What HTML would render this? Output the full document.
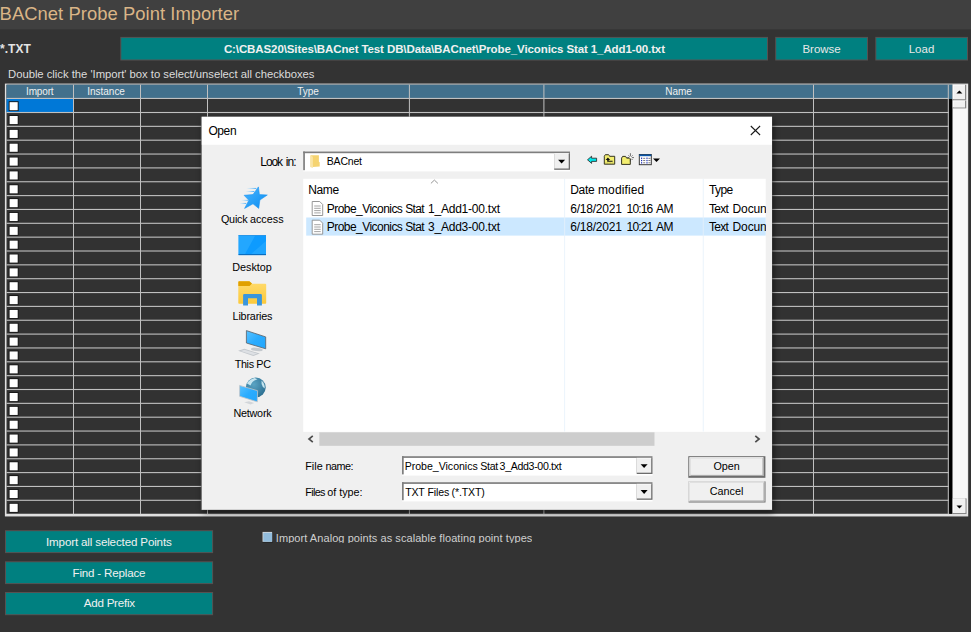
<!DOCTYPE html>
<html><head><meta charset="utf-8"><title>BACnet Probe Point Importer</title>
<style>
html,body{margin:0;padding:0;background:#333333;overflow:hidden;}
#app{position:relative;width:971px;height:632px;background:#333333;overflow:hidden;font-family:"Liberation Sans",Arial,sans-serif;}
#app svg{position:absolute;left:0;top:0;}
.t{position:absolute;white-space:nowrap;display:block;}
</style></head><body>
<div id="app">
<svg width="971" height="632" viewBox="0 0 971 632">
<rect x="0" y="0" width="971.00" height="29.40" fill="#404040" />
<rect x="120.3" y="36.9" width="647.70" height="23.60" fill="#565252" />
<rect x="121.3" y="37.9" width="645.70" height="21.60" fill="#008080" />
<rect x="775.2" y="36.9" width="92.80" height="23.60" fill="#565252" />
<rect x="776.2" y="37.9" width="90.80" height="21.60" fill="#008080" />
<rect x="875.3" y="36.9" width="92.70" height="23.60" fill="#565252" />
<rect x="876.3" y="37.9" width="90.70" height="21.60" fill="#008080" />
<rect x="5.0" y="530.2" width="208.10" height="22.90" fill="#565252" />
<rect x="6.0" y="531.2" width="206.10" height="20.90" fill="#008080" />
<rect x="5.0" y="561.3" width="208.10" height="22.80" fill="#565252" />
<rect x="6.0" y="562.3" width="206.10" height="20.80" fill="#008080" />
<rect x="5.0" y="592" width="208.10" height="23.20" fill="#565252" />
<rect x="6.0" y="593" width="206.10" height="21.20" fill="#008080" />
<rect x="262.5" y="531.9" width="10.50" height="10.60" fill="#1c1c1c" />
<rect x="262.5" y="531.9" width="9.70" height="9.90" fill="#dcdcdc" />
<rect x="263.3" y="532.7" width="8.80" height="9.00" fill="#92bcdc" />
<rect x="4.9" y="83.6" width="963.30" height="432.85" fill="#e0e0e0" />
<rect x="6.5" y="84.69999999999999" width="946.10" height="429.05" fill="#323232" />
<rect x="6.5" y="84.69999999999999" width="946.10" height="14.30" fill="#42708c" />
<rect x="6.5" y="98.45" width="67.00" height="14.05" fill="#0078d7" />
<rect x="949.1" y="99" width="3.50" height="414.75" fill="#000" />
<rect x="6.5" y="97.9" width="942.30" height="1.10" fill="#c0c0c0" />
<rect x="6.5" y="111.95" width="942.30" height="1.10" fill="#c0c0c0" />
<rect x="6.5" y="125.80000000000001" width="942.30" height="1.10" fill="#c0c0c0" />
<rect x="6.5" y="139.64999999999998" width="942.30" height="1.10" fill="#c0c0c0" />
<rect x="6.5" y="153.5" width="942.30" height="1.10" fill="#c0c0c0" />
<rect x="6.5" y="167.35" width="942.30" height="1.10" fill="#c0c0c0" />
<rect x="6.5" y="181.2" width="942.30" height="1.10" fill="#c0c0c0" />
<rect x="6.5" y="195.05" width="942.30" height="1.10" fill="#c0c0c0" />
<rect x="6.5" y="208.89999999999998" width="942.30" height="1.10" fill="#c0c0c0" />
<rect x="6.5" y="222.75" width="942.30" height="1.10" fill="#c0c0c0" />
<rect x="6.5" y="236.6" width="942.30" height="1.10" fill="#c0c0c0" />
<rect x="6.5" y="250.45" width="942.30" height="1.10" fill="#c0c0c0" />
<rect x="6.5" y="264.3" width="942.30" height="1.10" fill="#c0c0c0" />
<rect x="6.5" y="278.15" width="942.30" height="1.10" fill="#c0c0c0" />
<rect x="6.5" y="292.0" width="942.30" height="1.10" fill="#c0c0c0" />
<rect x="6.5" y="305.84999999999997" width="942.30" height="1.10" fill="#c0c0c0" />
<rect x="6.5" y="319.7" width="942.30" height="1.10" fill="#c0c0c0" />
<rect x="6.5" y="333.55" width="942.30" height="1.10" fill="#c0c0c0" />
<rect x="6.5" y="347.4" width="942.30" height="1.10" fill="#c0c0c0" />
<rect x="6.5" y="361.24999999999994" width="942.30" height="1.10" fill="#c0c0c0" />
<rect x="6.5" y="375.09999999999997" width="942.30" height="1.10" fill="#c0c0c0" />
<rect x="6.5" y="388.95" width="942.30" height="1.10" fill="#c0c0c0" />
<rect x="6.5" y="402.8" width="942.30" height="1.10" fill="#c0c0c0" />
<rect x="6.5" y="416.65000000000003" width="942.30" height="1.10" fill="#c0c0c0" />
<rect x="6.5" y="430.49999999999994" width="942.30" height="1.10" fill="#c0c0c0" />
<rect x="6.5" y="444.34999999999997" width="942.30" height="1.10" fill="#c0c0c0" />
<rect x="6.5" y="458.2" width="942.30" height="1.10" fill="#c0c0c0" />
<rect x="6.5" y="472.05" width="942.30" height="1.10" fill="#c0c0c0" />
<rect x="6.5" y="485.90000000000003" width="942.30" height="1.10" fill="#c0c0c0" />
<rect x="6.5" y="499.74999999999994" width="942.30" height="1.10" fill="#c0c0c0" />
<rect x="73.0" y="84.69999999999999" width="1.00" height="429.45" fill="#c0c0c0" />
<rect x="140.0" y="84.69999999999999" width="1.00" height="429.45" fill="#c0c0c0" />
<rect x="207.0" y="84.69999999999999" width="1.00" height="429.45" fill="#c0c0c0" />
<rect x="408.9" y="84.69999999999999" width="1.00" height="429.45" fill="#c0c0c0" />
<rect x="543.4" y="84.69999999999999" width="1.00" height="429.45" fill="#c0c0c0" />
<rect x="813.0" y="84.69999999999999" width="1.00" height="429.45" fill="#c0c0c0" />
<rect x="947.8" y="84.69999999999999" width="1.00" height="429.45" fill="#c0c0c0" />
<rect x="8.7" y="101.25" width="9.90" height="9.80" fill="#161616" />
<rect x="9.6" y="102.15" width="8.10" height="8.10" fill="#ffffff" />
<rect x="8.7" y="115.1" width="9.90" height="9.80" fill="#161616" />
<rect x="9.6" y="116.0" width="8.10" height="8.10" fill="#ffffff" />
<rect x="8.7" y="128.95000000000002" width="9.90" height="9.80" fill="#161616" />
<rect x="9.6" y="129.85000000000002" width="8.10" height="8.10" fill="#ffffff" />
<rect x="8.7" y="142.79999999999998" width="9.90" height="9.80" fill="#161616" />
<rect x="9.6" y="143.7" width="8.10" height="8.10" fill="#ffffff" />
<rect x="8.7" y="156.65" width="9.90" height="9.80" fill="#161616" />
<rect x="9.6" y="157.55" width="8.10" height="8.10" fill="#ffffff" />
<rect x="8.7" y="170.5" width="9.90" height="9.80" fill="#161616" />
<rect x="9.6" y="171.4" width="8.10" height="8.10" fill="#ffffff" />
<rect x="8.7" y="184.35" width="9.90" height="9.80" fill="#161616" />
<rect x="9.6" y="185.25" width="8.10" height="8.10" fill="#ffffff" />
<rect x="8.7" y="198.20000000000002" width="9.90" height="9.80" fill="#161616" />
<rect x="9.6" y="199.10000000000002" width="8.10" height="8.10" fill="#ffffff" />
<rect x="8.7" y="212.04999999999998" width="9.90" height="9.80" fill="#161616" />
<rect x="9.6" y="212.95" width="8.10" height="8.10" fill="#ffffff" />
<rect x="8.7" y="225.9" width="9.90" height="9.80" fill="#161616" />
<rect x="9.6" y="226.8" width="8.10" height="8.10" fill="#ffffff" />
<rect x="8.7" y="239.75" width="9.90" height="9.80" fill="#161616" />
<rect x="9.6" y="240.65" width="8.10" height="8.10" fill="#ffffff" />
<rect x="8.7" y="253.6" width="9.90" height="9.80" fill="#161616" />
<rect x="9.6" y="254.5" width="8.10" height="8.10" fill="#ffffff" />
<rect x="8.7" y="267.45000000000005" width="9.90" height="9.80" fill="#161616" />
<rect x="9.6" y="268.35" width="8.10" height="8.10" fill="#ffffff" />
<rect x="8.7" y="281.3" width="9.90" height="9.80" fill="#161616" />
<rect x="9.6" y="282.2" width="8.10" height="8.10" fill="#ffffff" />
<rect x="8.7" y="295.15000000000003" width="9.90" height="9.80" fill="#161616" />
<rect x="9.6" y="296.05" width="8.10" height="8.10" fill="#ffffff" />
<rect x="8.7" y="309.0" width="9.90" height="9.80" fill="#161616" />
<rect x="9.6" y="309.9" width="8.10" height="8.10" fill="#ffffff" />
<rect x="8.7" y="322.85" width="9.90" height="9.80" fill="#161616" />
<rect x="9.6" y="323.75" width="8.10" height="8.10" fill="#ffffff" />
<rect x="8.7" y="336.70000000000005" width="9.90" height="9.80" fill="#161616" />
<rect x="9.6" y="337.6" width="8.10" height="8.10" fill="#ffffff" />
<rect x="8.7" y="350.55" width="9.90" height="9.80" fill="#161616" />
<rect x="9.6" y="351.45" width="8.10" height="8.10" fill="#ffffff" />
<rect x="8.7" y="364.4" width="9.90" height="9.80" fill="#161616" />
<rect x="9.6" y="365.29999999999995" width="8.10" height="8.10" fill="#ffffff" />
<rect x="8.7" y="378.25" width="9.90" height="9.80" fill="#161616" />
<rect x="9.6" y="379.15" width="8.10" height="8.10" fill="#ffffff" />
<rect x="8.7" y="392.1" width="9.90" height="9.80" fill="#161616" />
<rect x="9.6" y="393.0" width="8.10" height="8.10" fill="#ffffff" />
<rect x="8.7" y="405.95000000000005" width="9.90" height="9.80" fill="#161616" />
<rect x="9.6" y="406.85" width="8.10" height="8.10" fill="#ffffff" />
<rect x="8.7" y="419.80000000000007" width="9.90" height="9.80" fill="#161616" />
<rect x="9.6" y="420.70000000000005" width="8.10" height="8.10" fill="#ffffff" />
<rect x="8.7" y="433.65" width="9.90" height="9.80" fill="#161616" />
<rect x="9.6" y="434.54999999999995" width="8.10" height="8.10" fill="#ffffff" />
<rect x="8.7" y="447.5" width="9.90" height="9.80" fill="#161616" />
<rect x="9.6" y="448.4" width="8.10" height="8.10" fill="#ffffff" />
<rect x="8.7" y="461.35" width="9.90" height="9.80" fill="#161616" />
<rect x="9.6" y="462.25" width="8.10" height="8.10" fill="#ffffff" />
<rect x="8.7" y="475.20000000000005" width="9.90" height="9.80" fill="#161616" />
<rect x="9.6" y="476.1" width="8.10" height="8.10" fill="#ffffff" />
<rect x="8.7" y="489.05000000000007" width="9.90" height="9.80" fill="#161616" />
<rect x="9.6" y="489.95000000000005" width="8.10" height="8.10" fill="#ffffff" />
<rect x="8.7" y="502.9" width="9.90" height="9.80" fill="#161616" />
<rect x="9.6" y="503.79999999999995" width="8.10" height="8.10" fill="#ffffff" />
<rect x="952.6" y="84.69999999999999" width="14.90" height="429.05" fill="#f7f7f7" />
<rect x="952.8" y="84.7" width="13.50" height="15.50" fill="#868686" />
<rect x="952.8" y="84.7" width="12.20" height="14.40" fill="#ffffff" />
<rect x="953.5999999999999" y="85.5" width="11.40" height="13.60" fill="#f0f0f0" />
<path d="M956.4 93.6 L962.4 93.6 L959.4 90.4 Z" fill="#000"/>
<rect x="952.8" y="100.5" width="13.50" height="7.90" fill="#868686" />
<rect x="952.8" y="100.5" width="12.20" height="6.80" fill="#ffffff" />
<rect x="953.5999999999999" y="101.3" width="11.40" height="6.00" fill="#f0f0f0" />
<rect x="952.8" y="498.4" width="13.80" height="15.60" fill="#868686" />
<rect x="952.8" y="498.4" width="12.50" height="14.50" fill="#ffffff" />
<rect x="953.5999999999999" y="499.2" width="11.70" height="13.70" fill="#f0f0f0" />
<path d="M956.5 505.4 L962.3 505.4 L959.4 508.6 Z" fill="#000"/>
<defs><filter id="sh" x="-5%" y="-5%" width="110%" height="110%"><feGaussianBlur stdDeviation="3.2"/></filter></defs>
<rect x="202.8" y="119.85" width="570.70" height="392.95" fill="#000" opacity="0.55" filter="url(#sh)"/>
<rect x="200.8" y="116.55" width="571.50" height="393.55" fill="#6a6a6a" opacity="0.8"/>
<rect x="201.8" y="116.85" width="570.20" height="392.95" fill="#f0f0f0" />
<rect x="201.8" y="116.85" width="570.20" height="27.95" fill="#ffffff" />
<path d="M750.8 126 L760.1 135 M760.1 126 L750.8 135" stroke="#1a1a1a" stroke-width="1.05" fill="none"/>
<rect x="303.2" y="151.5" width="266.80" height="19.90" fill="#ffffff" /><rect x="303.2" y="151.5" width="266.80" height="1.70" fill="#7e7e7e" /><rect x="303.2" y="151.5" width="1.70" height="18.70" fill="#7e7e7e" /><rect x="554.2" y="153.2" width="15.80" height="16.60" fill="#6c6c6c" /><rect x="554.2" y="153.2" width="14.50" height="15.30" fill="#f0f0f0" /><rect x="554.2" y="153.2" width="14.50" height="0.80" fill="#f8f8f8" /><path d="M558.1 159.8 L565.1 159.8 L561.6 163.6 Z" fill="#000"/>
<rect x="402" y="456.2" width="250.50" height="19.40" fill="#ffffff" /><rect x="402" y="456.2" width="250.50" height="1.70" fill="#7e7e7e" /><rect x="402" y="456.2" width="1.70" height="18.20" fill="#7e7e7e" /><rect x="636.7" y="457.9" width="15.80" height="16.10" fill="#6c6c6c" /><rect x="636.7" y="457.9" width="14.50" height="14.80" fill="#f0f0f0" /><rect x="636.7" y="457.9" width="14.50" height="0.80" fill="#f8f8f8" /><path d="M640.6 464.2 L647.6 464.2 L644.1 468.0 Z" fill="#000"/>
<rect x="402" y="482.2" width="250.50" height="19.20" fill="#ffffff" /><rect x="402" y="482.2" width="250.50" height="1.70" fill="#7e7e7e" /><rect x="402" y="482.2" width="1.70" height="18.00" fill="#7e7e7e" /><rect x="636.7" y="483.9" width="15.80" height="15.90" fill="#6c6c6c" /><rect x="636.7" y="483.9" width="14.50" height="14.60" fill="#f0f0f0" /><rect x="636.7" y="483.9" width="14.50" height="0.80" fill="#f8f8f8" /><path d="M640.6 490.1 L647.6 490.1 L644.1 493.9 Z" fill="#000"/>
<path d="M310.6 155.2 L318.9 155.2 L318.9 161.8 L319.7 162.3 L319.7 166.6 L312.6 167 Z" fill="#f5d370"/>
<path d="M310.1 155.3 L312.9 156.7 L312.9 167.9 L310.1 167.1 Z" fill="#fae4a4"/>
<rect x="303.2" y="178.8" width="462.50" height="253.10" fill="#ffffff" />
<rect x="306.2" y="217.5" width="459.50" height="18.10" fill="#cce8ff" />
<rect x="564.3" y="178.8" width="0.80" height="252.70" fill="#e5f1fb" />
<rect x="702.8" y="178.8" width="0.80" height="252.70" fill="#e5f1fb" />
<path d="M430.9 183.4 L434.4 180.1 L437.9 183.4" stroke="#8a8a8a" stroke-width="0.9" fill="none"/>
<path d="M312.2 201.5 L319.7 201.5 L322.7 204.5 L322.7 215.5 L312.2 215.5 Z" fill="#fff" stroke="#8c8c8c" stroke-width="0.9"/><path d="M314.2 206.0 L320.7 206.0" stroke="#9a9a9a" stroke-width="0.9"/><path d="M314.2 208.3 L320.7 208.3" stroke="#9a9a9a" stroke-width="0.9"/><path d="M314.2 210.6 L320.7 210.6" stroke="#9a9a9a" stroke-width="0.9"/><path d="M314.2 212.9 L320.7 212.9" stroke="#9a9a9a" stroke-width="0.9"/>
<path d="M312.2 220.2 L319.7 220.2 L322.7 223.2 L322.7 234.2 L312.2 234.2 Z" fill="#fff" stroke="#8c8c8c" stroke-width="0.9"/><path d="M314.2 224.7 L320.7 224.7" stroke="#9a9a9a" stroke-width="0.9"/><path d="M314.2 227.0 L320.7 227.0" stroke="#9a9a9a" stroke-width="0.9"/><path d="M314.2 229.3 L320.7 229.3" stroke="#9a9a9a" stroke-width="0.9"/><path d="M314.2 231.6 L320.7 231.6" stroke="#9a9a9a" stroke-width="0.9"/>
<rect x="303.2" y="431.9" width="462.50" height="14.10" fill="#f0f0f0" />
<rect x="319.3" y="432.3" width="335.20" height="13.50" fill="#cdcdcd" />
<path d="M312.8 435.8 L309 439 L312.8 442.2" stroke="#4d4d4d" stroke-width="1.7" fill="none"/>
<path d="M755.3 435.8 L759.1 439 L755.3 442.2" stroke="#4d4d4d" stroke-width="1.7" fill="none"/>
<rect x="688.3" y="456.2" width="77.10" height="21.60" fill="#6a6a6a" /><rect x="689.3" y="457.2" width="75.20" height="19.70" fill="#6e6e6e" /><rect x="689.3" y="457.2" width="74.20" height="18.70" fill="#ffffff" /><rect x="690.3" y="458.2" width="73.20" height="17.70" fill="#a4a4a4" /><rect x="690.3" y="458.2" width="72.20" height="16.70" fill="#f0f0f0" />
<rect x="688.6" y="481.4" width="76.90" height="21.10" fill="#6e6e6e" /><rect x="688.6" y="481.4" width="75.90" height="20.10" fill="#ffffff" /><rect x="689.6" y="482.4" width="74.90" height="19.10" fill="#a4a4a4" /><rect x="689.6" y="482.4" width="73.90" height="18.10" fill="#f0f0f0" />
<path d="M587.5 159.8 L591.6 156.2 L591.6 158.2 L596.6 158.2 L596.6 161.4 L591.6 161.4 L591.6 163.4 Z" fill="#00e6ea" stroke="#2a2020" stroke-width="0.8" stroke-linejoin="round"/>
<path d="M604.3 156.3 L605.3 154.7 L608.6 154.7 L609.6 156.3 L614.7 156.3 L614.7 164.2 L604.3 164.2 Z" fill="#f3ee70" stroke="#2a2a1a" stroke-width="0.95" stroke-linejoin="round"/>
<path d="M605.3 155.6 L608.8 155.6" stroke="#c8c060" stroke-width="0.8"/>
<path d="M607.9 157.6 L605.6 159.9 L607.2 159.9 L607.2 161.8 L612.6 161.8 L612.6 160.7 L608.7 160.7 L608.7 159.9 L610.2 159.9 Z" fill="#111"/>
<path d="M605.5 163.1 L613.8 163.1" stroke="#8a8640" stroke-width="0.7" stroke-dasharray="0.8 0.8"/>
<path d="M621.6 158.1 L622.6 156.4 L625.6 156.4 L626.6 158.1 L630.3 158.1 L630.3 164.4 L621.6 164.4 Z" fill="#f3ee70" stroke="#2a2a1a" stroke-width="0.95" stroke-linejoin="round"/>
<path d="M630.4 153.2 L630.4 156.3 M630.4 159 L630.4 161.5 M627.2 157.6 L629.2 157.6 M631.8 157.6 L634 157.6 M628.4 155.4 L629.6 156.6 M631.4 158.8 L632.6 160 M632.6 155.4 L631.4 156.6" stroke="#3a3a3a" stroke-width="0.7"/>
<circle cx="630.4" cy="157.6" r="0.9" fill="#fff"/>
<rect x="639.3" y="154.5" width="12.00" height="10.20" fill="#ffffff" stroke="#303030" stroke-width="0.95"/>
<rect x="639.3" y="154.5" width="12.00" height="1.70" fill="#0a56a8" />
<rect x="641" y="157.6" width="1.20" height="1.30" fill="#1c2fb4" />
<rect x="643.2" y="157.9" width="2.00" height="0.70" fill="#444" />
<rect x="646.4" y="157.6" width="1.20" height="1.30" fill="#1c2fb4" />
<rect x="648.4" y="157.9" width="2.00" height="0.70" fill="#444" />
<rect x="641" y="159.9" width="1.20" height="1.30" fill="#1c2fb4" />
<rect x="643.2" y="160.20000000000002" width="2.00" height="0.70" fill="#444" />
<rect x="646.4" y="159.9" width="1.20" height="1.30" fill="#1c2fb4" />
<rect x="648.4" y="160.20000000000002" width="2.00" height="0.70" fill="#444" />
<rect x="641" y="162.2" width="1.20" height="1.30" fill="#1c2fb4" />
<rect x="643.2" y="162.5" width="2.00" height="0.70" fill="#444" />
<rect x="646.4" y="162.2" width="1.20" height="1.30" fill="#1c2fb4" />
<rect x="648.4" y="162.5" width="2.00" height="0.70" fill="#444" />
<path d="M653 158.4 L660 158.4 L656.5 162 Z" fill="#000"/>
<defs><linearGradient id="gstar" x1="0" y1="0" x2="1" y2="1"><stop offset="0" stop-color="#4ab6ff"/><stop offset="1" stop-color="#0a8cf0"/></linearGradient><linearGradient id="gfold" x1="0" y1="0" x2="0" y2="1"><stop offset="0" stop-color="#ffdb6e"/><stop offset="1" stop-color="#fcc93a"/></linearGradient><linearGradient id="gscr" x1="0" y1="0" x2="1" y2="1"><stop offset="0" stop-color="#5ac2ff"/><stop offset="0.5" stop-color="#2aacff"/><stop offset="1" stop-color="#22a6fb"/></linearGradient><radialGradient id="gglobe" cx="0.4" cy="0.35" r="0.7"><stop offset="0" stop-color="#5aa4c4"/><stop offset="1" stop-color="#2c6e90"/></radialGradient><linearGradient id="gline" x1="0" y1="0" x2="1" y2="0"><stop offset="0" stop-color="#8cd0ff" stop-opacity="0"/><stop offset="1" stop-color="#3aa8f8"/></linearGradient></defs>
<path d="M258.4 186.9 L259.4 194.6 L267.3 195 L259.9 200 L258.7 208.4 L253 203.8 L244.6 208.4 L248.9 200.3 L244.1 195.3 L253 194.6 Z" fill="url(#gstar)" stroke="#1a94f4" stroke-width="0.6" stroke-linejoin="round"/>
<rect x="246.3" y="187.95000000000002" width="9.9" height="0.9" fill="url(#gline)"/>
<rect x="245.5" y="191.05" width="8.7" height="0.9" fill="url(#gline)"/>
<rect x="241" y="199.85000000000002" width="7.6" height="0.9" fill="url(#gline)"/>
<rect x="239.5" y="202.95000000000002" width="6.7" height="0.9" fill="url(#gline)"/>
<rect x="238.6" y="235.1" width="27.40" height="20.00" fill="#0d9bff" />
<path d="M238.6 235.1 L255.5 235.1 L244.5 255.1 L238.6 255.1 Z" fill="#28a9ff" opacity="0.85"/>
<path d="M266 241 L266 255.1 L250 255.1 Z" fill="#28a9ff" opacity="0.7"/>
<rect x="238.6" y="254" width="27.40" height="1.10" fill="#0a6ec0" />
<rect x="238.6" y="235.1" width="27.40" height="0.70" fill="#2a90e0" />
<path d="M238.3 282.1 Q238.3 281.3 239.1 281.3 L249.4 281.3 L252 283.8 L265.4 283.8 Q266.2 283.8 266.2 284.6 L266.2 303 Q266.2 303.8 265.4 303.8 L239.1 303.8 Q238.3 303.8 238.3 303 Z" fill="url(#gfold)"/>
<path d="M238.3 282.1 Q238.3 281.3 239.1 281.3 L249.4 281.3 L252 283.6 L249.6 285.9 L238.3 285.9 Z" fill="#e0a000"/>
<path d="M243.1 305.4 L243.1 295.2 Q243.1 294 244.3 294 L260.7 294 Q261.9 294 261.9 295.2 L261.9 305.4 L257 305.4 L257 298.3 L248 298.3 L248 305.4 Z" fill="#3a96dd"/>
<path d="M251 349.3 Q251 347.6 254 347.6 L260 348.3 Q262.9 348.9 262.9 350 Q262.5 351.4 259 351.3 L253 350.6 Q251 350.2 251 349.3 Z" fill="#c4c9ce"/>
<path d="M246.4 330.6 L265.7 336.9 L265.7 348.8 L246.4 343 Z" fill="url(#gscr)" stroke="#5a6066" stroke-width="0.8" stroke-linejoin="round"/>
<path d="M238.1 350.8 L244.4 348.8 L259.8 353.6 L253.3 355.9 Z" fill="#c2c7cc"/>
<path d="M240.5 350.9 L244.5 349.7 L257.3 353.6 L253.3 354.9 Z" fill="#dde0e4"/>
<circle cx="255.8" cy="387.4" r="9.9" fill="url(#gglobe)"/>
<path d="M247 383.5 Q249 379.5 254.5 378 L257.5 379.2 Q252 381 250.5 385.5 Z" fill="#d4eef6" opacity="0.9"/>
<path d="M261.5 380.5 Q265.2 384 264.8 388.5 Q262.5 387.5 261.6 384 Z" fill="#d4eef6" opacity="0.9"/>
<path d="M244.2 402.3 L249 401.2 L254.3 403 L250.5 404.6 Z" fill="#d2d6da"/>
<path d="M239.6 385.4 L257.6 390.7 L257.3 401.8 L239.6 396.3 Z" fill="url(#gscr)" stroke="#c0c4c8" stroke-width="0.8" stroke-linejoin="round"/>
</svg>
<span class="t" style="left:-0.40px;top:5px;font-size:18.4px;line-height:18.4px;color:#dab587;letter-spacing:0.048px;">BACnet Probe Point Importer</span>
<span class="t" style="left:0.10px;top:43px;font-size:12px;line-height:12px;color:#e4e4e4;font-weight:bold;">*.TXT</span>
<span class="t" style="left:223.90px;top:44px;font-size:11.5px;line-height:11.5px;color:#f0f0f0;font-weight:bold;letter-spacing:-0.103px;">C:\CBAS20\Sites\BACnet Test DB\Data\BACnet\Probe_Viconics Stat 1_Add1-00.txt</span>
<span class="t" style="left:802.43px;top:44px;font-size:11.5px;line-height:11.5px;color:#e8e8e8;">Browse</span>
<span class="t" style="left:908.71px;top:44px;font-size:11.5px;line-height:11.5px;color:#e8e8e8;">Load</span>
<span class="t" style="left:8.00px;top:69px;font-size:11.3px;line-height:11.3px;color:#dcdcdc;letter-spacing:-0.029px;">Double click the 'Import' box to select/unselect all checkboxes</span>
<span class="t" style="left:26.00px;top:87px;font-size:10px;line-height:10px;color:#f0f0f0;letter-spacing:-0.140px;">Import</span>
<span class="t" style="left:87.30px;top:87px;font-size:10px;line-height:10px;color:#f0f0f0;letter-spacing:-0.025px;">Instance</span>
<span class="t" style="left:297.16px;top:87px;font-size:10px;line-height:10px;color:#f0f0f0;">Type</span>
<span class="t" style="left:665.16px;top:87px;font-size:10px;line-height:10px;color:#f0f0f0;">Name</span>
<span class="t" style="left:46.00px;top:536px;font-size:11.6px;line-height:11.6px;color:#f0f0f0;letter-spacing:-0.150px;">Import all selected Points</span>
<span class="t" style="left:72.50px;top:567px;font-size:11.6px;line-height:11.6px;color:#f0f0f0;letter-spacing:-0.181px;">Find - Replace</span>
<span class="t" style="left:83.80px;top:597px;font-size:11.6px;line-height:11.6px;color:#f0f0f0;letter-spacing:-0.251px;">Add Prefix</span>
<span class="t" style="left:275.80px;top:533px;font-size:11px;line-height:11px;color:#cfcfcf;letter-spacing:0.065px;height:10px;overflow:hidden;">Import Analog points as scalable floating point types</span>
<span class="t" style="left:208.40px;top:125px;font-size:12px;line-height:12px;color:#000;letter-spacing:-0.389px;">Open</span>
<span class="t" style="left:260.30px;top:156px;font-size:12px;line-height:12px;color:#000;letter-spacing:-1.080px;">Look</span>
<span class="t" style="left:285.70px;top:156px;font-size:12px;line-height:12px;color:#000;letter-spacing:-0.891px;">in:</span>
<span class="t" style="left:326.80px;top:156px;font-size:10.5px;line-height:10.5px;color:#000;letter-spacing:-0.198px;">BACnet</span>
<span class="t" style="left:308.20px;top:184px;font-size:12px;line-height:12px;color:#000;letter-spacing:-0.352px;">Name</span>
<span class="t" style="left:570.20px;top:184px;font-size:12px;line-height:12px;color:#000;letter-spacing:-0.262px;">Date</span>
<span class="t" style="left:598.00px;top:184px;font-size:12px;line-height:12px;color:#000;letter-spacing:0.118px;">modified</span>
<span class="t" style="left:709.10px;top:184px;font-size:12px;line-height:12px;color:#000;letter-spacing:-0.654px;">Type</span>
<span class="t" style="left:326.80px;top:203px;font-size:12px;line-height:12px;color:#000;letter-spacing:-0.547px;">Probe_Viconics</span>
<span class="t" style="left:405.30px;top:203px;font-size:12px;line-height:12px;color:#000;letter-spacing:-0.711px;">Stat</span>
<span class="t" style="left:428.00px;top:203px;font-size:12px;line-height:12px;color:#000;letter-spacing:-0.225px;">1_Add1-00.txt</span>
<span class="t" style="left:570.20px;top:203px;font-size:12px;line-height:12px;color:#000;letter-spacing:-0.209px;">6/18/2021</span>
<span class="t" style="left:626.60px;top:203px;font-size:12px;line-height:12px;color:#000;letter-spacing:-0.866px;">10:16</span>
<span class="t" style="left:656.10px;top:203px;font-size:12px;line-height:12px;color:#000;letter-spacing:-0.700px;">AM</span>
<span class="t" style="left:709.10px;top:203px;font-size:12px;line-height:12px;color:#000;letter-spacing:-0.727px;">Text</span>
<span class="t" style="left:732.50px;top:203px;font-size:12px;line-height:12px;color:#000;letter-spacing:-0.098px;width:33.2px;overflow:hidden;">Docun</span>
<span class="t" style="left:326.80px;top:221px;font-size:12px;line-height:12px;color:#000;letter-spacing:-0.547px;">Probe_Viconics</span>
<span class="t" style="left:405.30px;top:221px;font-size:12px;line-height:12px;color:#000;letter-spacing:-0.711px;">Stat</span>
<span class="t" style="left:428.00px;top:221px;font-size:12px;line-height:12px;color:#000;letter-spacing:-0.225px;">3_Add3-00.txt</span>
<span class="t" style="left:570.20px;top:221px;font-size:12px;line-height:12px;color:#000;letter-spacing:-0.209px;">6/18/2021</span>
<span class="t" style="left:626.60px;top:221px;font-size:12px;line-height:12px;color:#000;letter-spacing:-0.866px;">10:21</span>
<span class="t" style="left:656.10px;top:221px;font-size:12px;line-height:12px;color:#000;letter-spacing:-0.700px;">AM</span>
<span class="t" style="left:709.10px;top:221px;font-size:12px;line-height:12px;color:#000;letter-spacing:-0.727px;">Text</span>
<span class="t" style="left:732.50px;top:221px;font-size:12px;line-height:12px;color:#000;letter-spacing:-0.098px;width:33.2px;overflow:hidden;">Docun</span>
<span class="t" style="left:220.90px;top:214px;font-size:10.8px;line-height:10.8px;color:#000;letter-spacing:-0.201px;">Quick</span>
<span class="t" style="left:249.90px;top:214px;font-size:10.8px;line-height:10.8px;color:#000;letter-spacing:0.031px;">access</span>
<span class="t" style="left:232.20px;top:262px;font-size:10.8px;line-height:10.8px;color:#000;letter-spacing:-0.003px;">Desktop</span>
<span class="t" style="left:232.60px;top:311px;font-size:10.8px;line-height:10.8px;color:#000;letter-spacing:-0.191px;">Libraries</span>
<span class="t" style="left:234.70px;top:359px;font-size:10.8px;line-height:10.8px;color:#000;letter-spacing:-0.344px;">This PC</span>
<span class="t" style="left:233.50px;top:408px;font-size:10.8px;line-height:10.8px;color:#000;letter-spacing:-0.244px;">Network</span>
<span class="t" style="left:305.20px;top:461px;font-size:10.8px;line-height:10.8px;color:#000;letter-spacing:0.074px;">File</span>
<span class="t" style="left:325.60px;top:461px;font-size:10.8px;line-height:10.8px;color:#000;letter-spacing:-0.523px;">name:</span>
<span class="t" style="left:305.20px;top:487px;font-size:10.8px;line-height:10.8px;color:#000;letter-spacing:-0.621px;">Files</span>
<span class="t" style="left:327.20px;top:487px;font-size:10.8px;line-height:10.8px;color:#000;letter-spacing:-0.003px;">of type:</span>
<span class="t" style="left:404.70px;top:461px;font-size:10.6px;line-height:10.6px;color:#000;letter-spacing:-0.026px;">Probe_Viconics</span>
<span class="t" style="left:480.20px;top:461px;font-size:10.6px;line-height:10.6px;color:#000;letter-spacing:-0.239px;">Stat</span>
<span class="t" style="left:499.60px;top:461px;font-size:10.6px;line-height:10.6px;color:#000;letter-spacing:-0.331px;">3_Add3-00.txt</span>
<span class="t" style="left:405.30px;top:487px;font-size:10.6px;line-height:10.6px;color:#000;letter-spacing:-0.273px;">TXT</span>
<span class="t" style="left:427.60px;top:487px;font-size:10.6px;line-height:10.6px;color:#000;letter-spacing:-0.196px;">Files</span>
<span class="t" style="left:451.60px;top:487px;font-size:10.6px;line-height:10.6px;color:#000;letter-spacing:-0.150px;">(*.TXT)</span>
<span class="t" style="left:713.39px;top:461px;font-size:10.8px;line-height:10.8px;color:#000;">Open</span>
<span class="t" style="left:709.79px;top:486px;font-size:10.8px;line-height:10.8px;color:#000;">Cancel</span>
</div>
</body></html>
